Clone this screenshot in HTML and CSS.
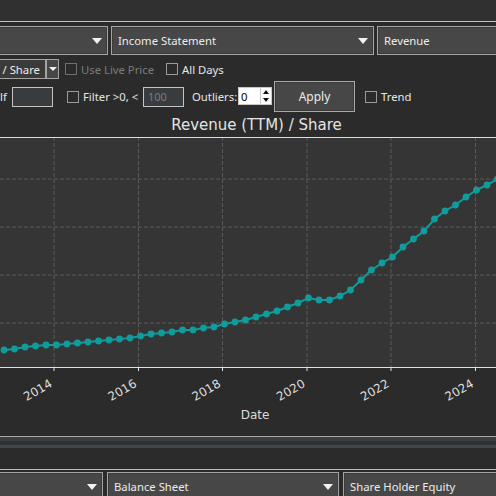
FILE: index.html
```html
<!DOCTYPE html>
<html>
<head>
<meta charset="utf-8">
<link rel="stylesheet" href="styles.css">
</head>
<body>
<div class="tabbar"></div>
<div class="pane">
  <div class="combo-row top-combos">
    <div class="combo c1"><span class="arrow"></span></div>
    <div class="combo c2"><span class="ctext">Income Statement</span><span class="arrow"></span></div>
    <div class="combo c3"><span class="ctext">Revenue</span></div>
  </div>

  <div class="opt-row">
    <div class="share-combo"><span>/ Share</span></div>
    <div class="drop-btn"><span class="mini-arrow"></span></div>
    <label class="chk g-live disabled"><span class="cb"></span><span>Use Live Price</span></label>
    <label class="chk g-days"><span class="cb"></span><span>All Days</span></label>
  </div>

  <div class="opt-row2">
    <span class="cut">lf</span>
    <div class="field f1"></div>
    <label class="chk g-filter"><span class="cb"></span><span>Filter &gt;0, &lt;</span></label>
    <div class="field f2"><span class="ph">100</span></div>
    <span class="outl">Outliers:</span>
    <div class="spin"><span class="spin-val">0</span><span class="spin-btns"><span class="sb up"></span><span class="sb down"></span></span></div>
    <div class="btn">Apply</div>
    <label class="chk g-trend"><span class="cb"></span><span>Trend</span></label>
  </div>

  <div class="figure">
    <svg class="chart" width="496" height="324" viewBox="0 0 496 324">
      <defs>
        <marker id="dot" markerUnits="userSpaceOnUse" markerWidth="8" markerHeight="8" refX="4" refY="4">
          <circle cx="4" cy="4" r="3.4" fill="#109c9c"/>
        </marker>
      </defs>
      <text class="title" x="256.5" y="18" text-anchor="middle">Revenue (TTM) / Share</text>
      <rect x="-1" y="25" width="498" height="230" fill="#353535"/>
      <g class="grid">
        <line x1="54" y1="25" x2="54" y2="255"/>
        <line x1="138.5" y1="25" x2="138.5" y2="255"/>
        <line x1="222.5" y1="25" x2="222.5" y2="255"/>
        <line x1="307" y1="25" x2="307" y2="255"/>
        <line x1="391" y1="25" x2="391" y2="255"/>
        <line x1="475.5" y1="25" x2="475.5" y2="255"/>
        <line x1="0" y1="67" x2="496" y2="67"/>
        <line x1="0" y1="115" x2="496" y2="115"/>
        <line x1="0" y1="163" x2="496" y2="163"/>
        <line x1="0" y1="211" x2="496" y2="211"/>
      </g>
      <line class="spine" x1="0" y1="25.5" x2="496" y2="25.5"/>
      <line class="spine" x1="0" y1="255.5" x2="496" y2="255.5"/>
      <g class="ticks">
        <line x1="54" y1="255" x2="54" y2="259"/>
        <line x1="138.5" y1="255" x2="138.5" y2="259"/>
        <line x1="222.5" y1="255" x2="222.5" y2="259"/>
        <line x1="307" y1="255" x2="307" y2="259"/>
        <line x1="391" y1="255" x2="391" y2="259"/>
        <line x1="475.5" y1="255" x2="475.5" y2="259"/>
      </g>
      <g class="tlabels">
        <text transform="translate(53 274) rotate(-30)" text-anchor="end">2014</text>
        <text transform="translate(137.5 274) rotate(-30)" text-anchor="end">2016</text>
        <text transform="translate(221.5 274) rotate(-30)" text-anchor="end">2018</text>
        <text transform="translate(306 274) rotate(-30)" text-anchor="end">2020</text>
        <text transform="translate(390 274) rotate(-30)" text-anchor="end">2022</text>
        <text transform="translate(474.5 274) rotate(-30)" text-anchor="end">2024</text>
      </g>
      <text class="xlabel" x="255" y="306.5" text-anchor="middle">Date</text>
      <polyline class="series" marker-start="url(#dot)" marker-mid="url(#dot)" marker-end="url(#dot)"
        points="4,238 14.5,237 25,235 35.5,234 46,233 56.5,233 67,232 77.5,231 88,230 98.5,229 109,228 119.5,227 130,226 140.5,224 151,222 161.5,221 172,220 182.5,218 193,218 203.5,216 214,215 224.5,212 235,210 245.5,208 256,205 266.5,202 277,199 287.5,195 298,191 308.5,186 319,188 329.5,188 340,184 350.5,178 361,168 371.5,158 382,151 392.5,145 403,135 413.5,127 424,119 434.5,107 445,99 455.5,93 466,85 476.5,78 487,73 497.5,67"/>
    </svg>
  </div>

  <div class="hsplit"><div class="hs1"></div><div class="hs2"></div><div class="hs3"></div></div>
</div>

<div class="pane2">
  <div class="combo-row bottom-combos">
    <div class="combo d1"><span class="arrow"></span></div>
    <div class="combo d2"><span class="ctext">Balance Sheet</span><span class="arrow"></span></div>
    <div class="combo d3"><span class="ctext">Share Holder Equity</span></div>
  </div>
</div>
</body>
</html>
```

FILE: styles.css
```css
html, body {
  margin: 0;
  padding: 0;
}
body {
  width: 496px;
  height: 496px;
  overflow: hidden;
  background: #2b2b2b;
  color: #e6e6e6;
  font-family: "Noto Sans", "Open Sans", sans-serif;
  font-size: 11.3px;
}
.tabbar {
  height: 21px;
  background: #303030;
  border-bottom: 1px solid #c2c2c2;
}
.pane {
  display: flex;
  flex-direction: column;
}
.combo-row {
  display: flex;
  gap: 3px;
  height: 29px;
}
.top-combos {
  margin-top: 4px;
}
.combo {
  box-sizing: border-box;
  height: 29px;
  flex: none;
  display: flex;
  align-items: center;
  background: #474747;
  border: 1px solid #a4a4a4;
  box-shadow: inset 0 0 0 1px #3c3c3c;
  padding-left: 6px;
  color: #ececec;
  white-space: nowrap;
  overflow: hidden;
}
.arrow {
  margin-left: auto;
  margin-right: 5px;
  width: 0;
  height: 0;
  border-left: 5.5px solid transparent;
  border-right: 5.5px solid transparent;
  border-top: 6px solid #f2f2f2;
}
.c1 { margin-left: -150px; width: 258px; }
.c2 { width: 263px; }
.c3 { width: 200px; }

.opt-row {
  display: flex;
  align-items: center;
  height: 20px;
  margin-top: 4px;
}
.share-combo {
  box-sizing: border-box;
  margin-left: -20px;
  width: 66px;
  height: 20px;
  border: 1px solid #a4a4a4;
  background: #3a3a3a;
  display: flex;
  align-items: center;
  justify-content: flex-end;
  padding-right: 5px;
  color: #ececec;
  white-space: nowrap;
}
.drop-btn {
  box-sizing: border-box;
  width: 13px;
  height: 20px;
  border: 1px solid #a4a4a4;
  background: #474747;
  display: flex;
  align-items: center;
  justify-content: center;
}
.mini-arrow {
  width: 0;
  height: 0;
  border-left: 4px solid transparent;
  border-right: 4px solid transparent;
  border-top: 4px solid #f2f2f2;
}
.chk {
  display: flex;
  align-items: center;
  white-space: nowrap;
  flex: none;
}
.cb {
  box-sizing: border-box;
  width: 12px;
  height: 12px;
  border: 1px solid #9a9a9a;
  background: #2b2b2b;
  margin-right: 4px;
  flex: none;
}
.disabled { color: #7c7c7c; }
.disabled .cb { border-color: #6e6e6e; }
.g-live { margin-left: 6px; width: 101px; }

.opt-row2 {
  display: flex;
  align-items: center;
  height: 31px;
  margin-top: 2px;
}
.cut { width: 12px; }
.field {
  box-sizing: border-box;
  width: 41px;
  height: 20px;
  border: 1px solid #c4c4c4;
  background: #393c3f;
  display: flex;
  align-items: center;
  padding-left: 4px;
}
.ph { color: #7c7c7c; font-size: 11px; }
.g-filter { margin-left: 14px; width: 76px; }
.outl { margin-left: 8px; width: 46px; white-space: nowrap; }
.spin {
  box-sizing: border-box;
  width: 34px;
  height: 18px;
  background: #ffffff;
  border: 1px solid #c8c8c8;
  display: flex;
  align-items: center;
  color: #000;
  margin-top: -1px;
}
.spin-val { padding-left: 2px; flex: 1; }
.spin-btns {
  display: flex;
  flex-direction: column;
  height: 100%;
  width: 10px;
  border-left: 1px solid #cfcfcf;
}
.sb {
  flex: 1;
  display: flex;
  align-items: center;
  justify-content: center;
}
.sb.up::after {
  content: "";
  border-left: 3px solid transparent;
  border-right: 3px solid transparent;
  border-bottom: 4px solid #111;
}
.sb.down::after {
  content: "";
  border-left: 3px solid transparent;
  border-right: 3px solid transparent;
  border-top: 4px solid #111;
}
.btn {
  box-sizing: border-box;
  margin-left: 2px;
  width: 81px;
  height: 31px;
  border: 1px solid #a8a8a8;
  box-shadow: inset 0 0 0 1px #3c3c3c;
  background: #474747;
  display: flex;
  align-items: center;
  justify-content: center;
  color: #ececec;
  font-size: 12px;
}
.g-trend { margin-left: 10px; }

.figure {
  height: 324px;
}
.chart {
  display: block;
  font-family: "DejaVu Sans", sans-serif;
}
.title {
  font-size: 15px;
  fill: #e4e4e4;
}
.grid line {
  stroke: #5e5e5e;
  stroke-width: 0.9;
  stroke-dasharray: 4 2;
}
.spine {
  stroke: #e0e0e0;
  stroke-width: 1;
}
.ticks line {
  stroke: #e0e0e0;
  stroke-width: 1;
}
.tlabels text {
  font-size: 12px;
  fill: #dcdcdc;
}
.xlabel {
  font-size: 12px;
  fill: #dcdcdc;
}
.series {
  fill: none;
  stroke: #109c9c;
  stroke-width: 2;
}
.hsplit {
  border-top: 1px solid #aaaaaa;
}
.hs1 { height: 4px; background: #3a3f44; }
.hs2 { height: 4px; background: #2f3235; }
.hs3 { height: 3px; background: #40454a; }

.pane2 {
  margin-top: 21px;
  border-top: 1px solid #bcbcbc;
}
.bottom-combos {
  margin-top: 2px;
  gap: 4px;
}
.d1 { margin-left: -150px; width: 253px; }
.d2 { width: 232px; }
.d3 { width: 200px; }
```
